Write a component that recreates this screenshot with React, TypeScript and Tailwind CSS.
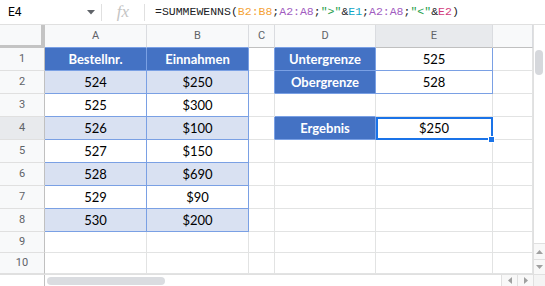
import { clsx } from 'clsx';

const BLUE_HEAD = 'bg-[#4472c4] text-white font-bold';
const LIGHT = 'bg-[#d9e1f2]';

const BR_BLUE = 'border-r-[#7aa0e4]';
const BR_GRAY = 'border-r-[#e2e3e3]';
const BB_BLUE = 'border-b-[#7aa0e4]';
const BB_GRAY = 'border-b-[#e2e3e3]';

const data: string[][] = [
  ['Bestellnr.', 'Einnahmen', '', 'Untergrenze', '525', ''],
  ['524', '$250', '', 'Obergrenze', '528', ''],
  ['525', '$300', '', '', '', ''],
  ['526', '$100', '', 'Ergebnis', '$250', ''],
  ['527', '$150', '', '', '', ''],
  ['528', '$690', '', '', '', ''],
  ['529', '$90', '', '', '', ''],
  ['530', '$200', '', '', '', ''],
  ['', '', '', '', '', ''],
  ['', '', '', '', '', ''],
];

const headers = ['A', 'B', 'C', 'D', 'E', ''];

// cell styling by row (1-based) and column (0 = A)
function cellStyle(r: number, c: number) {
  let bg = 'bg-white';
  let br = BR_GRAY;
  let bb = BB_GRAY;
  if (c <= 1 && r <= 8) {
    br = BR_BLUE;
    bb = BB_BLUE;
    if (r === 1) bg = BLUE_HEAD;
    else if (r % 2 === 0) bg = LIGHT;
  }
  if (c === 2 && [1, 2, 4].includes(r)) br = BR_BLUE;
  if (c === 3) {
    if ([1, 2, 4].includes(r)) {
      bg = BLUE_HEAD;
      br = BR_BLUE;
      bb = BB_BLUE;
    }
    if (r === 3) bb = BB_BLUE;
  }
  if (c === 4 && r <= 2) {
    br = BR_BLUE;
    bb = BB_BLUE;
  }
  return clsx(bg, br, bb);
}

function FormulaBar() {
  return (
    <div className="flex h-[25px] items-center border-b border-[#e0e0e0] bg-white font-['Roboto',sans-serif]">
      <div className="flex w-[101px] items-center justify-between pl-2 pr-[6px]">
        <span className="text-[12px] text-black">E4</span>
        <svg width="8" height="5" viewBox="0 0 8 5">
          <path d="M0 0h8L4 4.5z" fill="#5f6368" />
        </svg>
      </div>
      <div className="h-[17px] w-px bg-[#e0e0e0]" />
      <div className="flex w-[42px] items-center justify-center font-['Liberation_Serif',serif] text-[17px] italic text-[#c4c4c4]">
        fx
      </div>
      <div className="h-[17px] w-px bg-[#e0e0e0]" />
      <div className="pl-[10px] font-['Liberation_Mono',monospace] text-[11.5px] text-[#202124]">
        =SUMMEWENNS(<span className="text-[#f4a235]">B2:B8</span>;<span className="text-[#a15cbf]">A2:A8</span>;
        <span className="text-[#1e9e4a]">"&gt;"</span>&amp;<span className="text-[#10a5c6]">E1</span>;
        <span className="text-[#a15cbf]">A2:A8</span>;<span className="text-[#1e9e4a]">"&lt;"</span>&amp;
        <span className="text-[#d33a7c]">E2</span>)
      </div>
    </div>
  );
}

function Sheet() {
  return (
    <div className="grid shrink-0 grid-cols-[45px_102px_102px_26px_101px_117px_40px] font-['Lato',sans-serif] text-[13px]">
      <div className="h-[23px] border-r-4 border-b-[3px] border-[#c4c4c4] bg-[#f8f9fa]" />
      {headers.map((h, c) => (
        <div
          key={c}
          className={clsx(
            "flex h-[23px] items-center justify-center border-r border-b border-r-[#dadce0] font-['Roboto',sans-serif] text-[11px] text-[#5f6368]",
            c === 4 ? 'bg-[#e8eaed]' : 'bg-[#f8f9fa]',
            [0, 1, 3].includes(c) ? 'border-b-[#7aa0e4]' : 'border-b-[#c0c0c0]'
          )}
        >
          {h}
        </div>
      ))}
      {data.map((row, i) => {
        const r = i + 1;
        const h = r <= 8 ? 'h-[23px]' : 'h-[21px]';
        return [
          <div
            key={`rh${r}`}
            className={clsx(
              "flex items-center justify-center border-r border-b border-r-[#c0c0c0] border-b-[#e0e0e0] font-['Roboto',sans-serif] text-[11px] text-[#5f6368]",
              h,
              r === 4 ? 'bg-[#e8eaed]' : 'bg-[#f8f9fa]'
            )}
          >
            {r}
          </div>,
          ...row.map((v, c) => (
            <div
              key={`${r}-${c}`}
              className={clsx(
                'relative flex items-center justify-center border-r border-b pt-px text-black',
                h,
                cellStyle(r, c)
              )}
            >
              {v}
              {r === 4 && c === 4 && (
                <>
                  <div className="absolute left-0 top-0 -right-px -bottom-px border-2 border-[#1a73e8]" />
                  <div className="absolute -right-[3px] -bottom-[4px] z-10 h-[7px] w-[7px] border border-white bg-[#1a73e8]" />
                </>
              )}
            </div>
          )),
        ];
      })}
    </div>
  );
}

function VScroll() {
  return (
    <div className="w-[12px] shrink-0 border-l border-[#e0e0e0] bg-white">
      <div className="h-[218px] pt-[25px]">
        <div className="ml-px h-[25px] w-[8px] rounded-full bg-[#d6d8dc]" />
      </div>
      <div className="flex h-[16px] items-center justify-center border-t border-[#e0e0e0] bg-[#f8f8f8]">
        <svg width="7" height="4" viewBox="0 0 7 4">
          <path d="M0 4L3.5 0 7 4z" fill="#a0a0a0" />
        </svg>
      </div>
      <div className="flex h-[15px] items-center justify-center border-t border-[#e0e0e0] bg-[#f8f8f8]">
        <svg width="7" height="4" viewBox="0 0 7 4">
          <path d="M0 0h7L3.5 4z" fill="#a0a0a0" />
        </svg>
      </div>
    </div>
  );
}

function HScroll() {
  return (
    <div className="flex h-[12px] border-t border-[#e0e0e0] bg-white">
      <div className="w-[45px] border-r border-[#c0c0c0]" />
      <div className="flex flex-1 items-center pl-[2px]">
        <div className="h-[8px] w-[118px] rounded-full bg-[#dadce0]" />
      </div>
      <div className="flex w-[16px] items-center justify-center border-l border-[#e0e0e0] bg-[#f8f8f8]">
        <svg width="4" height="7" viewBox="0 0 4 7">
          <path d="M4 0v7L0 3.5z" fill="#a0a0a0" />
        </svg>
      </div>
      <div className="flex w-[16px] items-center justify-center border-l border-[#e0e0e0] bg-[#f8f8f8]">
        <svg width="4" height="7" viewBox="0 0 4 7">
          <path d="M0 0v7L4 3.5z" fill="#a0a0a0" />
        </svg>
      </div>
      <div className="w-[12px] border-l border-[#e0e0e0] bg-[#f4f4f4]" />
    </div>
  );
}

export default function App() {
  return (
    <div className="h-[286px] w-[545px] overflow-hidden bg-white">
      <FormulaBar />
      <div className="flex">
        <Sheet />
        <VScroll />
      </div>
      <HScroll />
    </div>
  );
}
